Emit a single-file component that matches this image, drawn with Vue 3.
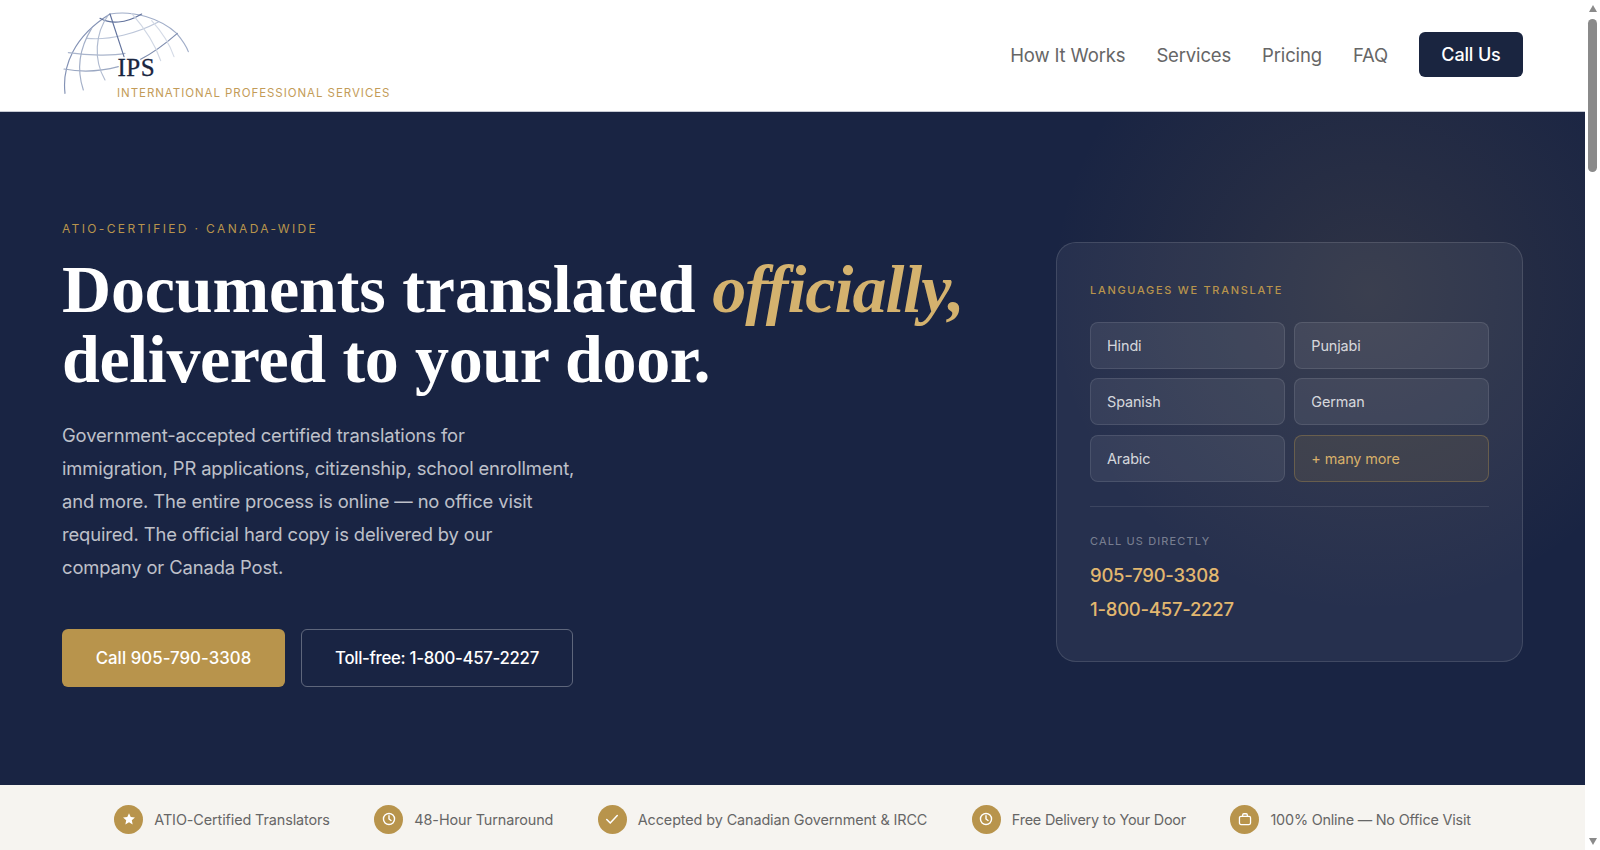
<template>
  <div class="page">
    <div class="site">
      <header class="nav">
        <a class="logo" href="#">
          <svg width="335" height="101" viewBox="62 4 335 101">
            <g transform="translate(50,0) scale(.3333)" fill="none" stroke-linecap="round" stroke-width="3.500">
              <path d="M45 280C36 200 70 110 180 42" stroke="#8392b5" />
              <path d="M180 42C250 30 330 55 380 100C395 118 408 135 415 155" stroke="#a0adc8" />
              <path d="M150 55C180 72 225 72 275 42" stroke="#62739d" />
              <path d="M110 115C180 122 260 100 325 66" stroke="#bcc6d9" />
              <path d="M55 158C130 170 200 165 225 160" stroke="#aab5cc" />
              <path d="M272 178C315 155 350 128 382 100" stroke="#7f8eb0" />
              <path d="M42 207C100 218 160 212 205 200" stroke="#9aa7c2" />
              <path d="M180 42L222 170" stroke="#62739d" />
              <path d="M175 45C135 100 130 180 165 240" stroke="#b0bbd0" />
              <path d="M125 85C85 150 80 210 100 270" stroke="#a3afc8" />
              <path d="M245 40C280 80 315 130 332 182" stroke="#d0d7e4" />
              <path d="M305 62C335 95 360 135 372 170" stroke="#d5dbe7" />
            </g>
            <text class="logo-ips" x="117.500" y="76">IPS</text>
            <text class="logo-name" x="117" y="97">INTERNATIONAL PROFESSIONAL SERVICES</text>
          </svg>
        </a>
        <nav class="nav-links">
          <a v-for="link in links" :key="link" href="#">{{ link }}</a>
          <a class="nav-cta" href="#">Call Us</a>
        </nav>
      </header>

      <section class="hero">
        <div class="hero-left">
          <p class="eyebrow">ATIO-CERTIFIED · CANADA-WIDE</p>
          <h1><span class="h1-first">Documents translated </span><em>officially,</em><br>delivered to your door.</h1>
          <p class="lead">
            Government-accepted certified translations for<br>
            immigration, PR applications, citizenship, school enrollment,<br>
            and more. The entire process is online — no office visit<br>
            required. The official hard copy is delivered by our<br>
            company or Canada Post.
          </p>
          <div class="hero-btns">
            <a class="btn btn-gold" href="#">Call 905-790-3308</a>
            <a class="btn btn-line" href="#">Toll-free: 1-800-457-2227</a>
          </div>
        </div>

        <aside class="card">
          <p class="card-label">LANGUAGES WE TRANSLATE</p>
          <div class="chips">
            <span v-for="lang in languages" :key="lang" class="chip">{{ lang }}</span>
            <span class="chip chip-more">+ many more</span>
          </div>
          <div class="card-contact">
            <p class="contact-label">CALL US DIRECTLY</p>
            <a href="#">905-790-3308</a>
            <a href="#">1-800-457-2227</a>
          </div>
        </aside>
      </section>

      <section class="strip">
        <div class="strip-item">
          <span class="strip-icon">
            <svg width="14" height="14" viewBox="0 0 24 24"><path fill="#fff" d="M12 2l3 6.6 7.2.8-5.4 4.8 1.5 7.1L12 17.7l-6.3 3.6 1.5-7.1L1.800 9.400 9 8.600z" /></svg>
          </span>
          <span>ATIO-Certified Translators</span>
        </div>
        <div class="strip-item">
          <span class="strip-icon">
            <svg width="14" height="14" viewBox="0 0 24 24" fill="none" stroke="#fff" stroke-width="2.400" stroke-linecap="round"><circle cx="12" cy="12" r="9.500" /><path d="M12 6.500V12l3.500 2.500" /></svg>
          </span>
          <span>48-Hour Turnaround</span>
        </div>
        <div class="strip-item">
          <span class="strip-icon">
            <svg width="14" height="14" viewBox="0 0 24 24" fill="none" stroke="#fff" stroke-width="2.600" stroke-linecap="round" stroke-linejoin="round"><path d="M3 13l6 6L21 6" /></svg>
          </span>
          <span>Accepted by Canadian Government &amp; IRCC</span>
        </div>
        <div class="strip-item strip-tight">
          <span class="strip-icon">
            <svg width="14" height="14" viewBox="0 0 24 24" fill="none" stroke="#fff" stroke-width="2.400" stroke-linecap="round"><circle cx="12" cy="12" r="9.500" /><path d="M12 6.500V12l3.500 2.500" /></svg>
          </span>
          <span>Free Delivery to Your Door</span>
        </div>
        <div class="strip-item strip-tight">
          <span class="strip-icon">
            <svg width="14" height="14" viewBox="0 0 24 24" fill="none" stroke="#fff" stroke-width="2.200" stroke-linejoin="round"><rect x="2.500" y="7.500" width="19" height="14" rx="2.500" /><path d="M8 7.500V5a2 2 0 0 1 2-2h4a2 2 0 0 1 2 2v2.500" /></svg>
          </span>
          <span>100% Online — No Office Visit</span>
        </div>
      </section>
    </div>

    <div class="scrollbar">
      <span class="arrow-up"></span>
      <span class="thumb"></span>
      <span class="arrow-down"></span>
    </div>
  </div>
</template>

<script setup>
const links = ['How It Works', 'Services', 'Pricing', 'FAQ']
const languages = ['Hindi', 'Punjabi', 'Spanish', 'German', 'Arabic']
</script>

<style>
html, body {
  margin: 0;
  overflow: hidden;
}
</style>

<style scoped>
.page {
  display: flex;
  height: 850px;
  overflow: hidden;
  background: #fff;
  font-family: Inter, "Noto Sans", sans-serif;
}
.site {
  flex: 1;
  min-width: 0;
}
a {
  text-decoration: none;
  color: inherit;
}
p {
  margin: 0;
}

/* nav */
.nav {
  display: flex;
  justify-content: space-between;
  align-items: center;
  height: 112px;
  box-sizing: border-box;
  padding: 0 62px 2px;
  border-bottom: 1px solid #c6cad4;
}
.logo {
  display: flex;
}
.logo-ips {
  font-family: "Liberation Serif", serif;
  font-size: 25px;
  font-weight: 400;
  letter-spacing: 0.5px;
  fill: #1a2540;
  stroke: #1a2540;
  stroke-width: 0.3px;
}
.logo-name {
  font-family: Inter, sans-serif;
  font-size: 11.5px;
  letter-spacing: 0.95px;
  fill: #c39c58;
}
.nav-links {
  display: flex;
  align-items: center;
  gap: 31px;
  font-size: 18.500px;
  letter-spacing: -0.15px;
  color: #666;
}
.nav-cta {
  display: flex;
  align-items: center;
  justify-content: center;
  width: 104px;
  height: 45px;
  box-sizing: border-box;
  background: #1a2540;
  color: #fff;
  border-radius: 6px;
  font-size: 18px;
  font-weight: 500;
}

/* hero */
.hero {
  display: flex;
  justify-content: space-between;
  align-items: center;
  height: 673px;
  box-sizing: border-box;
  padding: 6px 62px 0;
  background:
    radial-gradient(circle 320px at 1370px 180px, rgba(190, 150, 80, 0.13), transparent 100%),
    #192443;
}
.hero-left {
  padding-top: 5px;
}
.eyebrow {
  font-size: 12px;
  letter-spacing: 2.36px;
  color: #b8944c;
}
h1 {
  margin: 18px 0 0;
  font-family: "Liberation Serif", serif;
  font-size: 68px;
  line-height: 70.4px;
  font-weight: 700;
  color: #fff;
  white-space: nowrap;
  letter-spacing: -0.35px;
}
.h1-first {
  letter-spacing: -0.15px;
}
h1 em {
  font-style: italic;
  font-weight: 700;
  color: #d4b26e;
  letter-spacing: -1px;
}
.lead {
  margin-top: 24px;
  font-size: 18.400px;
  line-height: 33.1px;
  letter-spacing: -0.13px;
  color: rgba(255, 255, 255, 0.72);
  white-space: nowrap;
}
.hero-btns {
  display: flex;
  gap: 16px;
  margin-top: 45px;
}
.btn {
  display: flex;
  align-items: center;
  justify-content: center;
  height: 58px;
  box-sizing: border-box;
  border-radius: 6px;
  font-size: 16.800px;
  font-weight: 500;
  letter-spacing: -0.3px;
  color: #fff;
}
.btn-gold {
  width: 223px;
  background: #b8944c;
  letter-spacing: 0.05px;
}
.btn-line {
  width: 272px;
  border: 1px solid rgba(255, 255, 255, 0.3);
}

/* card */
.card {
  width: 467px;
  height: 420px;
  box-sizing: border-box;
  padding: 39px 33px 0;
  background: rgba(255, 255, 255, 0.06);
  border: 1px solid rgba(255, 255, 255, 0.12);
  border-radius: 20px;
}
.card-label {
  font-size: 11px;
  font-weight: 500;
  letter-spacing: 1.7px;
  line-height: 16px;
  color: #b8944c;
}
.chips {
  display: grid;
  grid-template-columns: 1fr 1fr;
  gap: 9.600px;
  margin-top: 24px;
}
.chip {
  display: flex;
  align-items: center;
  height: 47px;
  box-sizing: border-box;
  padding: 0 16px;
  background: rgba(255, 255, 255, 0.07);
  border: 1px solid rgba(255, 255, 255, 0.1);
  border-radius: 8px;
  font-size: 14.400px;
  letter-spacing: -0.1px;
  color: rgba(255, 255, 255, 0.8);
}
.chip-more {
  background: rgba(184, 148, 76, 0.12);
  border-color: rgba(184, 148, 76, 0.35);
  color: #d8b06a;
}
.card-contact {
  display: flex;
  flex-direction: column;
  align-items: flex-start;
  margin-top: 24.500px;
  padding-top: 26px;
  border-top: 1px solid rgba(255, 255, 255, 0.1);
  font-size: 18.500px;
  font-weight: 500;
  line-height: 34px;
  letter-spacing: -0.25px;
  color: #e2b76f;
}
.contact-label {
  margin-bottom: 9px;
  font-size: 11px;
  font-weight: 400;
  line-height: 16px;
  letter-spacing: 1.12px;
  color: rgba(255, 255, 255, 0.4);
}

/* strip */
.strip {
  display: flex;
  justify-content: center;
  align-items: center;
  gap: 44.500px;
  height: 68px;
  background: #f6f4f0;
  font-size: 14.400px;
  letter-spacing: -0.1px;
  color: #666;
}
.strip-item {
  display: flex;
  align-items: center;
  gap: 11px;
  white-space: nowrap;
}
.strip-tight {
  letter-spacing: -0.2px;
}
.strip-icon {
  display: flex;
  align-items: center;
  justify-content: center;
  width: 29px;
  height: 29px;
  border-radius: 50%;
  background: #b8944c;
}

/* scrollbar */
.scrollbar {
  display: flex;
  flex-direction: column;
  align-items: center;
  width: 15px;
  flex-shrink: 0;
  padding: 5px 0;
  box-sizing: border-box;
  background: #fff;
}
.arrow-up,
.arrow-down {
  width: 0;
  height: 0;
  border-left: 4.500px solid transparent;
  border-right: 4.500px solid transparent;
}
.arrow-up {
  border-bottom: 7px solid #8a8a8a;
}
.arrow-down {
  margin-top: auto;
  border-top: 7px solid #8a8a8a;
}
.thumb {
  width: 9px;
  height: 153px;
  margin-top: 7px;
  border-radius: 5px;
  background: #8a8a8a;
}
</style>
